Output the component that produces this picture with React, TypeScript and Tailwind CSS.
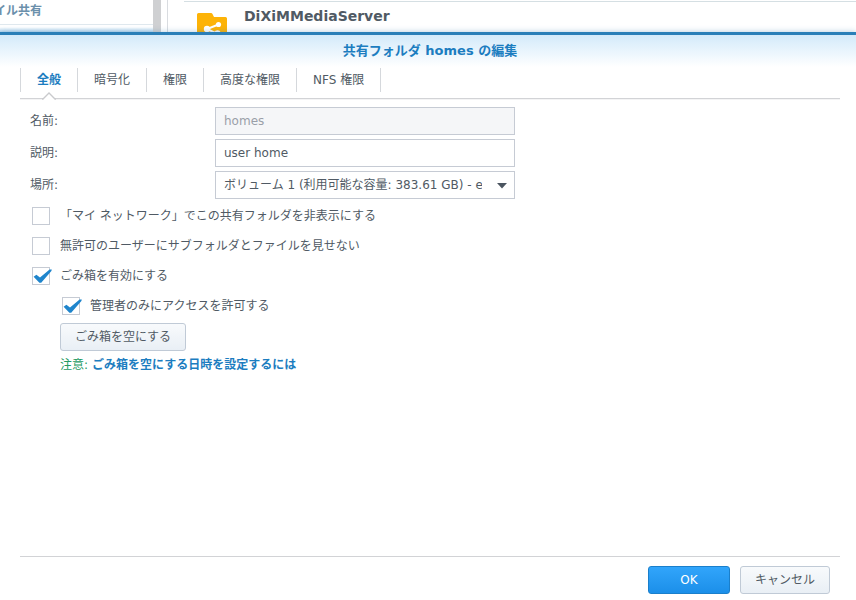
import { useState } from "react"

const tabs = ["全般", "暗号化", "権限", "高度な権限", "NFS 権限"]

interface CheckRowProps {
  id: string
  label: string
  defaultChecked?: boolean
  nested?: boolean
}

function CheckRow({ id, label, defaultChecked, nested }: CheckRowProps) {
  return (
    <div className={`flex h-[30px] items-center ${nested ? "pl-8" : "pl-0.5"}`}>
      <span className="relative flex h-[18px] w-[18px]">
        <input
          id={id}
          type="checkbox"
          defaultChecked={defaultChecked}
          className="peer h-[18px] w-[18px] appearance-none border border-[#c6cbd4] bg-white"
        />
        <svg
          viewBox="0 0 20 18"
          className="pointer-events-none absolute left-0 top-0 hidden h-[18px] w-5 peer-checked:block"
        >
          <path d="M1.6 9.8 L4.4 7.8 L8 10.6 L17.6 2.4 L19.8 2.4 L19.4 4 L9.2 15.8 L7.4 15.8 Z" fill="#1f85cc" />
        </svg>
      </span>
      <label htmlFor={id} className="pl-2.5">
        {label}
      </label>
    </div>
  )
}

function Backdrop() {
  return (
    <div className="flex h-8 shrink-0 overflow-hidden bg-white">
      {/* Sidebar */}
      <div className="flex w-[153px] shrink-0 flex-col">
        <div className="flex h-6 w-[42px] items-center justify-end overflow-hidden pb-0.5 font-bold text-[#6b90ab]">
          <span className="shrink-0 whitespace-nowrap">イル共有</span>
        </div>
        <div className="h-2 border-t border-[#dfe8ee] bg-gradient-to-b from-white from-30% to-[#b9d9f0]" />
      </div>
      <div className="w-2 shrink-0 bg-[#cfd0d2]" />
      <div className="w-[7px] shrink-0 border-r border-[#d9dce0]" />

      {/* Folder list */}
      <div className="flex-1 pl-4 pt-px">
        <div className="flex border-t border-[#d5dfe3] pl-[13px]">
          <svg viewBox="0 0 30 30" className="mt-[11px] h-[30px] w-[30px] shrink-0">
            <path d="M0 1.5 Q0 0 1.5 0 H14 Q15 0 15.5 1 L17 4 H28.5 Q30 4 30 5.5 V30 H0 Z" fill="#fdb307" />
            <path d="M21.5 11.5 L10 16 L20.5 21" fill="none" stroke="#fff" strokeWidth="2" />
            <circle cx="21.5" cy="11.5" r="2.6" fill="#fff" />
            <circle cx="10" cy="16" r="3.2" fill="#fff" />
            <circle cx="20.5" cy="20.5" r="3.2" fill="#fff" />
          </svg>
          <span className="pl-[17px] pt-1 text-sm font-bold text-[#505a64]">DiXiMMediaServer</span>
        </div>
      </div>
    </div>
  )
}

export default function App() {
  const [active, setActive] = useState(0)

  return (
    <div className="flex h-screen flex-col overflow-hidden bg-white font-['DejaVu_Sans','Noto_Sans_CJK_JP',sans-serif] text-xs text-[#505a64]">
      <Backdrop />

      <div
        role="dialog"
        aria-labelledby="dialog-title"
        className="relative flex flex-1 flex-col border-t-3 border-[#2a7fb8] bg-white shadow-[0_0_6px_rgba(40,110,160,0.35)]"
      >
        <header className="flex h-8 shrink-0 items-center justify-center bg-gradient-to-b from-[#d3eafa] to-white pl-1">
          <h1 id="dialog-title" className="text-[13px] font-bold text-[#1c7dc0]">
            共有フォルダ homes の編集
          </h1>
        </header>

        {/* Tabs */}
        <div role="tablist" className="ml-5 mr-4 flex shrink-0 border-b border-[#d2d3d6] pb-1.5 pt-px shadow-[0_1px_0_#f4f4f5]">
          {tabs.map((tab, i) => (
            <button
              key={tab}
              role="tab"
              aria-selected={i === active}
              onClick={() => setActive(i)}
              className={`relative h-6 border-r border-[#d5d8dc] px-4 first:border-l ${
                i === active ? "font-bold text-[#1c7dc0]" : ""
              }`}
            >
              {tab}
              {i === active && (
                <svg viewBox="0 0 14 8" className="absolute -bottom-2 left-1/2 h-2 w-3.5 -translate-x-1/2">
                  <path d="M0 8 L7 1 L14 8 Z" fill="#fff" />
                  <path d="M0 7 L1 7 L7 1 L13 7 L14 7" fill="none" stroke="#c9cacd" strokeWidth="1.3" />
                </svg>
              )}
            </button>
          ))}
        </div>

        <main className="flex-1 px-[30px] pt-1.5">
          <div className="flex h-8 items-center">
            <label htmlFor="name" className="w-[185px]">
              名前:
            </label>
            <input
              id="name"
              disabled
              defaultValue="homes"
              className="h-7 w-[300px] border border-[#c6cbd4] bg-[#f5f6f8] px-2 text-[#9a9fa8]"
            />
          </div>
          <div className="flex h-8 items-center">
            <label htmlFor="description" className="w-[185px]">
              説明:
            </label>
            <input
              id="description"
              defaultValue="user home"
              className="h-7 w-[300px] border border-[#c6cbd4] bg-white px-2"
            />
          </div>
          <div className="flex h-8 items-center">
            <label htmlFor="location" className="w-[185px]">
              場所:
            </label>
            <div className="relative">
              <select
                id="location"
                className="block h-7 w-[300px] appearance-none border border-[#c6cbd4] bg-white pl-2 pr-8"
              >
                <option>ボリューム 1 (利用可能な容量: 383.61 GB) - ext4</option>
              </select>
              <svg viewBox="0 0 10 6" className="pointer-events-none absolute right-2 top-3 h-1.5 w-2.5">
                <path d="M0 0 H10 L5 5.5 Z" fill="#4b5560" />
              </svg>
            </div>
          </div>

          <CheckRow id="hide" label="「マイ ネットワーク」でこの共有フォルダを非表示にする" />
          <CheckRow id="hide-sub" label="無許可のユーザーにサブフォルダとファイルを見せない" />
          <CheckRow id="recycle" label="ごみ箱を有効にする" defaultChecked />
          <CheckRow id="admin-only" label="管理者のみにアクセスを許可する" defaultChecked nested />

          <div className="pl-[30px] pt-0.5">
            <button className="block h-7 rounded-[3px] border border-[#c0cad6] bg-gradient-to-b from-[#f8fafc] to-[#e9eff5] px-3.5">
              ごみ箱を空にする
            </button>
            <p className="flex h-7 items-center gap-1 text-[#239a62]">
              注意:
              <a href="#schedule" className="font-bold text-[#1c7dc0]">
                ごみ箱を空にする日時を設定するには
              </a>
            </p>
          </div>
        </main>

        <footer className="ml-5 mr-4 flex h-11 shrink-0 items-center justify-end gap-2.5 border-t border-[#d2d3d6] pr-2.5 pt-0.5">
          <button className="h-7 w-[82px] rounded-[3px] border border-[#1a7fcb] bg-gradient-to-b from-[#31a5fb] to-[#1b8fe9] text-white">
            OK
          </button>
          <button className="h-7 w-[90px] rounded-[3px] border border-[#c0cad6] bg-gradient-to-b from-[#f8fafc] to-[#e9eff5]">
            キャンセル
          </button>
        </footer>
      </div>
    </div>
  )
}
